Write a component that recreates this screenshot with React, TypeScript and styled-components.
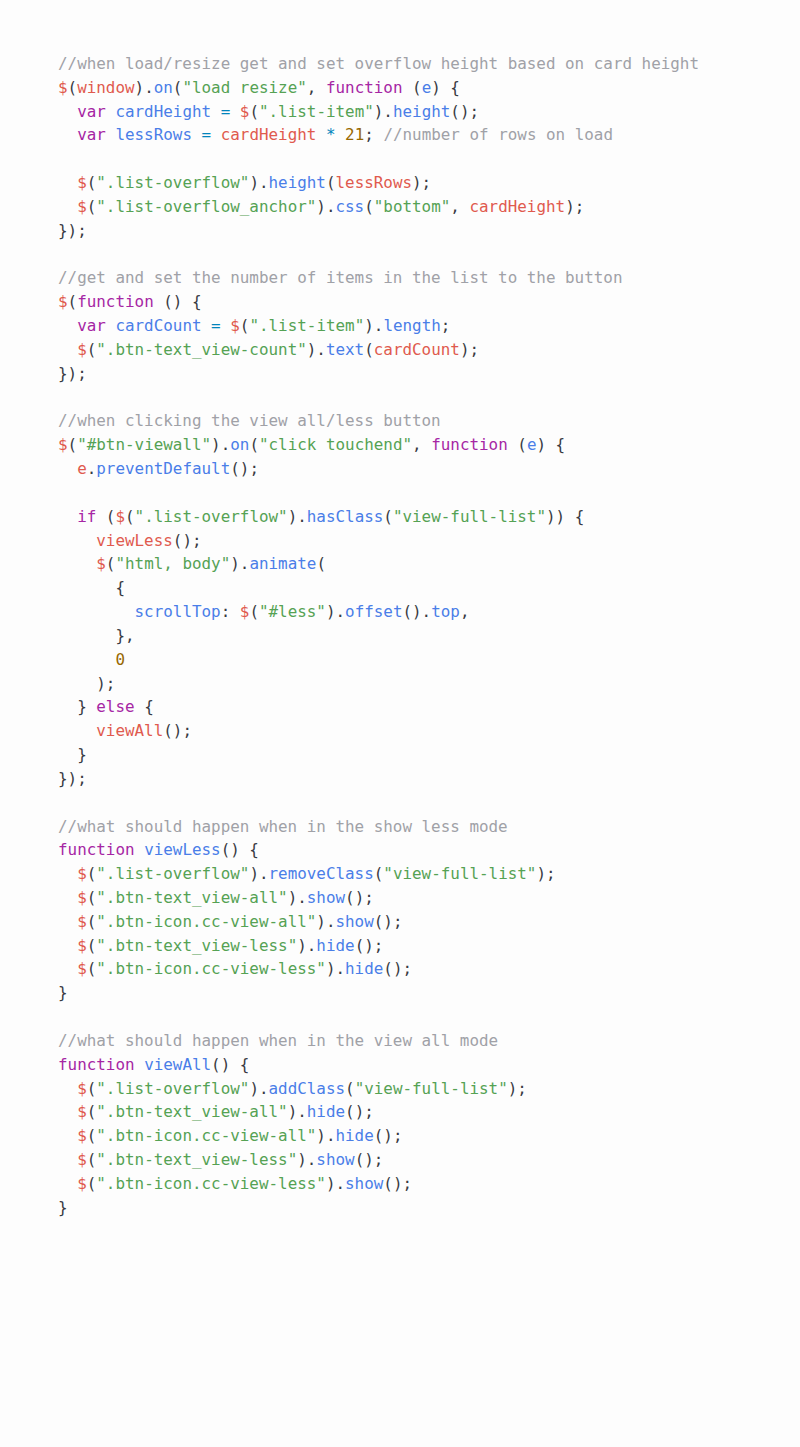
import React from "react";
import styled, { createGlobalStyle } from "styled-components";

const Global = createGlobalStyle`
  html, body { margin: 0; padding: 0; background: #fdfdfd; }
  #root { min-height: 1447px; }
`;

const Page = styled.main`
  min-height: 1447px;
  box-sizing: border-box;
  padding: 52px 0 0 58px;
  background: #fdfdfd;
`;

const Pre = styled.pre`
  margin: 0;
  font-family: "DejaVu Sans Mono", "Liberation Mono", monospace;
  font-size: 15.9px;
  line-height: 23.83px;
  color: #383a42;
  white-space: pre;
`;

const Line = styled.div`
  height: 23.83px;
`;

type Kind = "c" | "k" | "f" | "s" | "v" | "n" | "o" | "p";

const colors: Record<Kind, string> = {
  c: "#a0a1a7",
  k: "#a626a4",
  f: "#4a7ee8",
  s: "#55a254",
  v: "#e05a4e",
  n: "#986801",
  o: "#0184bc",
  p: "#383a42",
};

const Tok = styled.span<{ $k: Kind }>`
  color: ${(p) => colors[p.$k]};
`;

type T = [Kind, string];
const q = (s: string): T[] => [["v", "$"], ["p", "("], ["s", `"${s}"`], ["p", ")."]];

const lines: T[][] = [
  [["c", "//when load/resize get and set overflow height based on card height"]],
  [["v", "$"], ["p", "("], ["v", "window"], ["p", ")."], ["f", "on"], ["p", "("], ["s", '"load resize"'], ["p", ", "], ["k", "function"], ["p", " ("], ["f", "e"], ["p", ") {"]],
  [["p", "  "], ["k", "var"], ["p", " "], ["f", "cardHeight"], ["p", " "], ["o", "="], ["p", " "], ["v", "$"], ["p", "("], ["s", '".list-item"'], ["p", ")."], ["f", "height"], ["p", "();"]],
  [["p", "  "], ["k", "var"], ["p", " "], ["f", "lessRows"], ["p", " "], ["o", "="], ["p", " "], ["v", "cardHeight"], ["p", " "], ["o", "*"], ["p", " "], ["n", "21"], ["p", "; "], ["c", "//number of rows on load"]],
  [],
  [["p", "  "], ...q(".list-overflow"), ["f", "height"], ["p", "("], ["v", "lessRows"], ["p", ");"]],
  [["p", "  "], ...q(".list-overflow_anchor"), ["f", "css"], ["p", "("], ["s", '"bottom"'], ["p", ", "], ["v", "cardHeight"], ["p", ");"]],
  [["p", "});"]],
  [],
  [["c", "//get and set the number of items in the list to the button"]],
  [["v", "$"], ["p", "("], ["k", "function"], ["p", " () {"]],
  [["p", "  "], ["k", "var"], ["p", " "], ["f", "cardCount"], ["p", " "], ["o", "="], ["p", " "], ["v", "$"], ["p", "("], ["s", '".list-item"'], ["p", ")."], ["f", "length"], ["p", ";"]],
  [["p", "  "], ...q(".btn-text_view-count"), ["f", "text"], ["p", "("], ["v", "cardCount"], ["p", ");"]],
  [["p", "});"]],
  [],
  [["c", "//when clicking the view all/less button"]],
  [["v", "$"], ["p", "("], ["s", '"#btn-viewall"'], ["p", ")."], ["f", "on"], ["p", "("], ["s", '"click touchend"'], ["p", ", "], ["k", "function"], ["p", " ("], ["f", "e"], ["p", ") {"]],
  [["p", "  "], ["v", "e"], ["p", "."], ["f", "preventDefault"], ["p", "();"]],
  [],
  [["p", "  "], ["k", "if"], ["p", " ("], ["v", "$"], ["p", "("], ["s", '".list-overflow"'], ["p", ")."], ["f", "hasClass"], ["p", "("], ["s", '"view-full-list"'], ["p", ")) {"]],
  [["p", "    "], ["v", "viewLess"], ["p", "();"]],
  [["p", "    "], ...q("html, body"), ["f", "animate"], ["p", "("]],
  [["p", "      {"]],
  [["p", "        "], ["f", "scrollTop"], ["p", ": "], ["v", "$"], ["p", "("], ["s", '"#less"'], ["p", ")."], ["f", "offset"], ["p", "()."], ["f", "top"], ["p", ","]],
  [["p", "      },"]],
  [["p", "      "], ["n", "0"]],
  [["p", "    );"]],
  [["p", "  } "], ["k", "else"], ["p", " {"]],
  [["p", "    "], ["v", "viewAll"], ["p", "();"]],
  [["p", "  }"]],
  [["p", "});"]],
  [],
  [["c", "//what should happen when in the show less mode"]],
  [["k", "function"], ["p", " "], ["f", "viewLess"], ["p", "() {"]],
  [["p", "  "], ...q(".list-overflow"), ["f", "removeClass"], ["p", "("], ["s", '"view-full-list"'], ["p", ");"]],
  [["p", "  "], ...q(".btn-text_view-all"), ["f", "show"], ["p", "();"]],
  [["p", "  "], ...q(".btn-icon.cc-view-all"), ["f", "show"], ["p", "();"]],
  [["p", "  "], ...q(".btn-text_view-less"), ["f", "hide"], ["p", "();"]],
  [["p", "  "], ...q(".btn-icon.cc-view-less"), ["f", "hide"], ["p", "();"]],
  [["p", "}"]],
  [],
  [["c", "//what should happen when in the view all mode"]],
  [["k", "function"], ["p", " "], ["f", "viewAll"], ["p", "() {"]],
  [["p", "  "], ...q(".list-overflow"), ["f", "addClass"], ["p", "("], ["s", '"view-full-list"'], ["p", ");"]],
  [["p", "  "], ...q(".btn-text_view-all"), ["f", "hide"], ["p", "();"]],
  [["p", "  "], ...q(".btn-icon.cc-view-all"), ["f", "hide"], ["p", "();"]],
  [["p", "  "], ...q(".btn-text_view-less"), ["f", "show"], ["p", "();"]],
  [["p", "  "], ...q(".btn-icon.cc-view-less"), ["f", "show"], ["p", "();"]],
  [["p", "}"]],
];

export default function App() {
  return (
    <>
      <Global />
      <Page>
        <Pre>
          {lines.map((ln, i) => (
            <Line key={i}>
              {ln.length === 0
                ? " "
                : ln.map(([k, t], j) => (
                    <Tok key={j} $k={k}>
                      {t}
                    </Tok>
                  ))}
            </Line>
          ))}
        </Pre>
      </Page>
    </>
  );
}
